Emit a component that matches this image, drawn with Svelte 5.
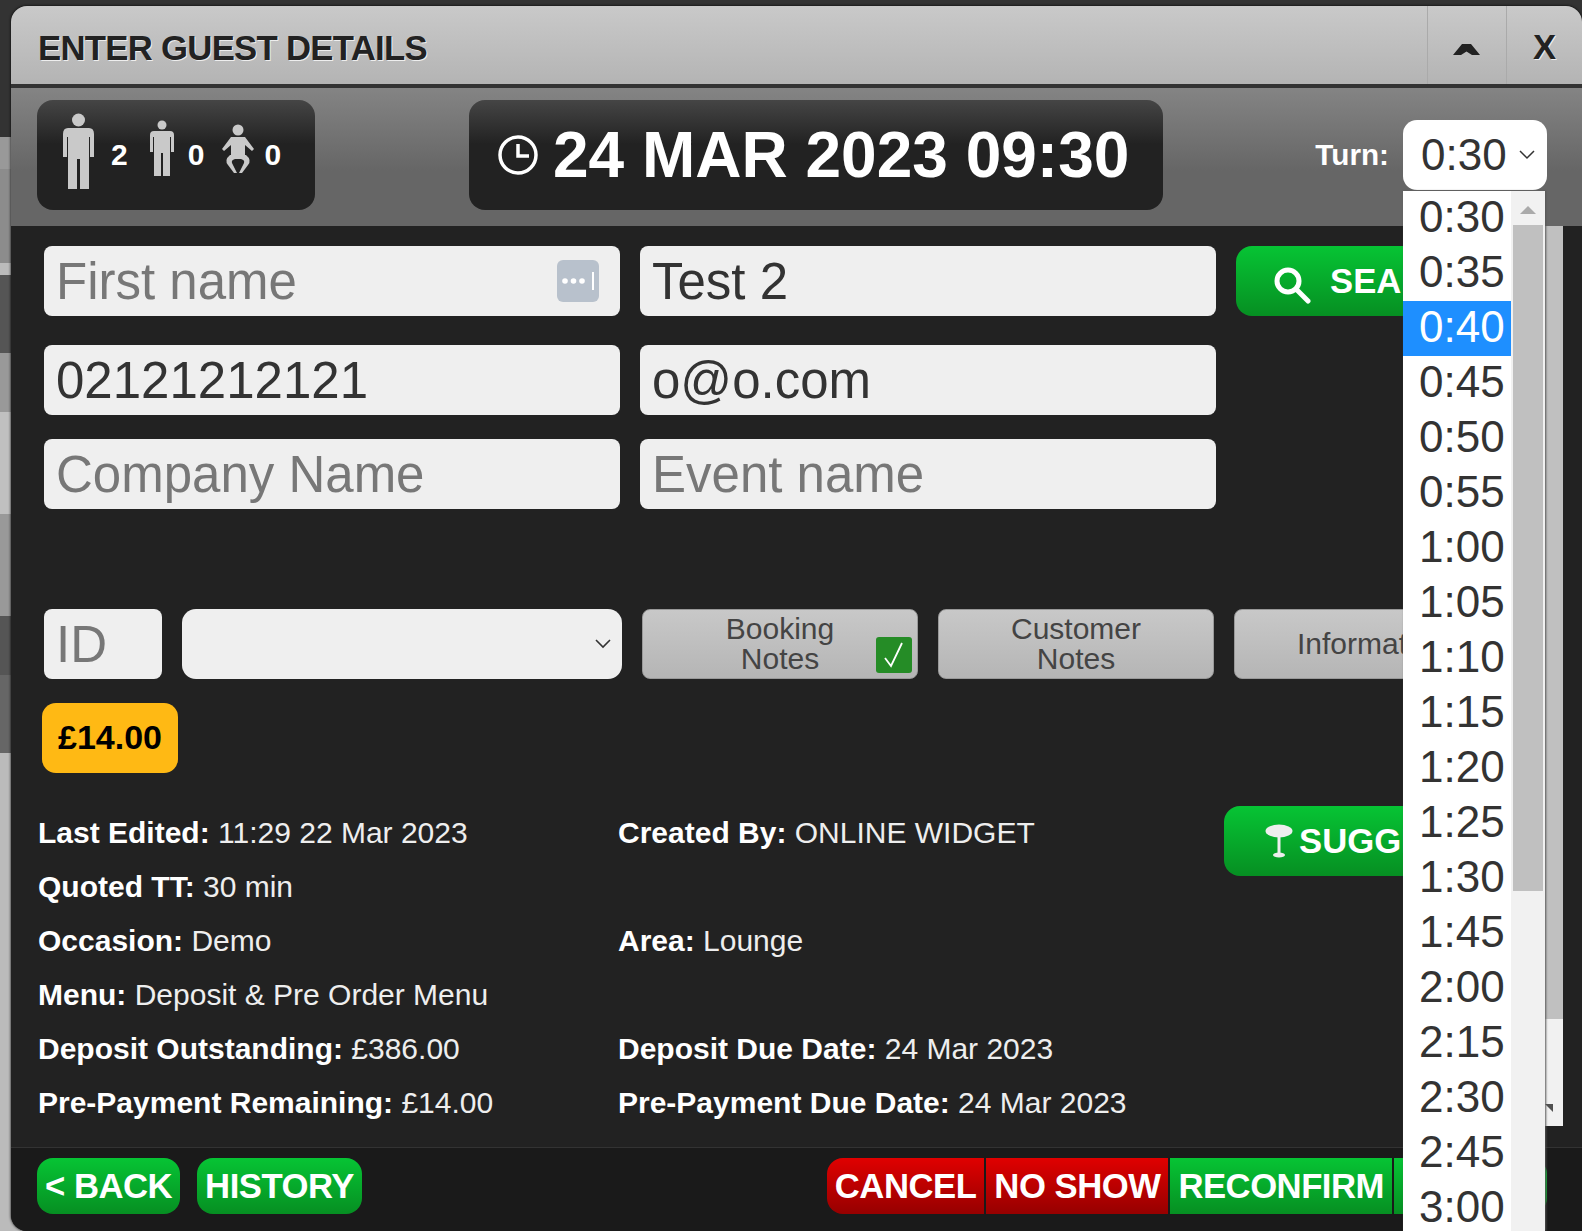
<script>
  const times = ["0:30","0:35","0:40","0:45","0:50","0:55","1:00","1:05","1:10","1:15","1:20","1:25","1:30","1:45","2:00","2:15","2:30","2:45","3:00"];
  const info = [
    [["Last Edited:", "11:29 22 Mar 2023"], ["Created By:", "ONLINE WIDGET"]],
    [["Quoted TT:", "30 min"], null],
    [["Occasion:", "Demo"], ["Area:", "Lounge"]],
    [["Menu:", "Deposit & Pre Order Menu"], null],
    [["Deposit Outstanding:", "£386.00"], ["Deposit Due Date:", "24 Mar 2023"]],
    [["Pre-Payment Remaining:", "£14.00"], ["Pre-Payment Due Date:", "24 Mar 2023"]]
  ];
</script>

<div class="page">
  <div class="modal">
    <header class="title">
      <h1>ENTER GUEST DETAILS</h1>
      <div class="title-btn collapse">
        <svg width="30" height="14" viewBox="0 0 30 14"><path d="M1 13 L10 2 H19 L28 13 H20 L14.500 9.500 L9 13 Z" fill="#222"/></svg>
      </div>
      <div class="title-btn close">X</div>
    </header>

    <div class="toolbar">
      <div class="pill covers">
        <svg class="man" width="33" height="77" viewBox="0 0 33 77" fill="#c9c9c9">
          <circle cx="16.500" cy="7" r="6.500"/>
          <path d="M6 15 H27 Q32 15 32 21 V44 H28 V24 H27 V76 H18 V46 H15 V76 H6 V24 H5 V44 H1 V21 Q1 15 6 15Z"/>
        </svg>
        <span class="count first">2</span>
        <svg class="child" width="24" height="56" viewBox="0 0 24 56" fill="#c9c9c9">
          <circle cx="12" cy="5" r="4.500"/>
          <path d="M4 11 H20 Q24 11 24 15 V32 H21 V17 H20 V56 H13 V33 H11 V56 H4 V17 H3 V32 H0 V15 Q0 11 4 11Z"/>
        </svg>
        <span class="count second">0</span>
        <svg class="baby" width="32" height="50" viewBox="0 0 32 50" fill="#c9c9c9">
          <circle cx="16" cy="6" r="5.500"/>
          <path d="M9 13 H23 L32 25 L30 27 L23 21 V31 H9 V21 L2 27 L0 25Z"/>
          <path d="M8 31 Q2 36 6 41 L12 49 H15 L10 39 Q9 36 13 35 H19 Q23 36 22 39 L17 49 H20 L26 41 Q30 36 24 31Z"/>
        </svg>
        <span class="count third">0</span>
      </div>

      <div class="pill when">
        <svg width="42" height="42" viewBox="0 0 42 42" fill="none" stroke="#fff" stroke-width="3.500">
          <circle cx="21" cy="21" r="18"/>
          <path d="M21 10 V22 H32"/>
        </svg>
        <span>24 MAR 2023 09:30</span>
      </div>

      <label class="turn-label">Turn:</label>
      <div class="turn">
        <span>0:30</span>
        <svg width="16" height="10" viewBox="0 0 16 10" fill="none" stroke="#333" stroke-width="1.500"><path d="M1 1 L8 8 L15 1"/></svg>
        <div class="dropdown">
          <ul>
            {#each times as t}
              <li class:on={t === "0:40"}>{t}</li>
            {/each}
          </ul>
          <div class="list-scroll">
            <div class="arrow-up"></div>
            <div class="list-thumb"></div>
          </div>
        </div>
      </div>
    </div>

    <div class="body">
      <div class="content">
        <div class="row first-row">
          <div class="field">
            <input placeholder="First name" />
            <div class="keyicon">
              <svg width="42" height="42" viewBox="0 0 42 42"><rect width="42" height="42" rx="6" fill="#b8c1cc"/><circle cx="8" cy="21" r="2.800" fill="#fff"/><circle cx="16.500" cy="21" r="2.800" fill="#fff"/><circle cx="25" cy="21" r="2.800" fill="#fff"/><rect x="35" y="12" width="2" height="18" fill="#fff"/></svg>
            </div>
          </div>
          <input value="Test 2" />
          <div class="green-btn search">
            <svg width="38" height="38" viewBox="0 0 38 38" fill="none" stroke="#fff" stroke-width="5"><circle cx="15" cy="15" r="11"/><path d="M23 23 L35 35" stroke-linecap="round"/></svg>
            <span>SEARCH</span>
          </div>
        </div>
        <div class="row second-row">
          <input value="02121212121" />
          <input value="o@o.com" />
        </div>
        <div class="row third-row">
          <input placeholder="Company Name" />
          <input placeholder="Event name" />
        </div>

        <div class="row notes-row">
          <input class="id" placeholder="ID" />
          <div class="tag-select">
            <svg width="16" height="10" viewBox="0 0 16 10" fill="none" stroke="#333" stroke-width="1.600"><path d="M1 1 L8 8 L15 1"/></svg>
          </div>
          <div class="note-btn">Booking<br />Notes
            <div class="tick">
              <svg width="24" height="28" viewBox="0 0 24 28" fill="none" stroke="#fff" stroke-width="1.800"><path d="M3 17 L9 25 L20 2"/></svg>
            </div>
          </div>
          <div class="note-btn">Customer<br />Notes</div>
          <div class="note-btn">Information</div>
        </div>

        <div class="price">£14.00</div>

        <div class="details">
          <div class="info">
            {#each info as row}
              {#each row as cell}
                <div class="cell">
                  {#if cell}<b>{cell[0]}</b> {cell[1]}{/if}
                </div>
              {/each}
            {/each}
          </div>
          <div class="green-btn suggest">
            <svg width="28" height="34" viewBox="0 0 28 34" fill="#eee"><ellipse cx="14" cy="7" rx="13.500" ry="6.500"/><rect x="12.500" y="12" width="3" height="18"/><ellipse cx="14" cy="31" rx="6" ry="2.500"/></svg>
            <span>SUGGEST</span>
          </div>
        </div>
      </div>

      <div class="page-scroll">
        <div class="page-thumb"></div>
        <div class="page-track">
          <div class="arrow-down"></div>
        </div>
      </div>
    </div>

    <footer class="bottom">
      <div class="foot-btn green round">&lt; BACK</div>
      <div class="foot-btn green round">HISTORY</div>
      <div class="actions">
        <div class="foot-btn red start">CANCEL</div>
        <div class="foot-btn red">NO SHOW</div>
        <div class="foot-btn green">RECONFIRM</div>
        <div class="foot-btn green end save">UPDATE</div>
      </div>
    </footer>
  </div>
</div>

<style>
  :global(body) {
    margin: 0;
    overflow: hidden;
    background: #222;
    font-family: "Liberation Sans", Arial, sans-serif;
  }
  .page {
    height: 100vh;
    box-sizing: border-box;
    padding: 6px 0 0 11px;
    /* bits of the page behind the modal */
    background: linear-gradient(
      #333 0 137px,
      #999 137px 169px,
      #8c8c8c 169px 263px,
      #bbb 263px 275px,
      #555 275px 353px,
      #999 353px 412px,
      #c0c0c0 412px 514px,
      #999 514px 616px,
      #555 616px 675px,
      #666 675px 753px,
      #bbb 753px
    );
    overflow: hidden;
  }
  .modal {
    height: 100%;
    display: flex;
    flex-direction: column;
    border-radius: 16px 16px 0 16px;
    overflow: hidden;
    background: #222;
    box-shadow: 0 0 3px #000;
  }

  /* title bar */
  .title {
    height: 78px;
    flex: none;
    display: flex;
    align-items: stretch;
    background: linear-gradient(#c9c9c9, #b4b4b4);
    border-bottom: 4px solid #333;
    color: #222;
  }
  .title h1 {
    flex: 1;
    margin: 0;
    padding: 3px 0 0 27px;
    font-size: 34.700px;
    letter-spacing: -0.700px;
    line-height: 78px;
    font-weight: bold;
    text-shadow: 1px 1px 0 #eee;
  }
  .title-btn {
    display: flex;
    align-items: center;
    justify-content: center;
    padding-top: 4px;
    border-left: 1px solid #aaa;
    font-size: 34.700px;
    font-weight: bold;
    text-shadow: 1px 1px 0 #eee;
  }
  .collapse { width: 78px; }
  .collapse svg { margin-top: 3px; }
  .close { width: 75px; }

  /* toolbar */
  .toolbar {
    height: 138px;
    flex: none;
    display: flex;
    align-items: flex-start;
    box-sizing: border-box;
    padding: 12px 35px 0 26px;
    background: linear-gradient(#848484, #666 60%);
    position: relative;
    z-index: 2;
  }
  .pill {
    height: 110px;
    border-radius: 16px;
    background: linear-gradient(#454545, #222 40%);
    color: #fff;
    display: flex;
    align-items: center;
    font-weight: bold;
    box-sizing: border-box;
  }
  .covers {
    width: 278px;
    padding-left: 25px;
  }
  .covers svg { filter: blur(0.5px); }
  .man { margin-top: -8px; }
  .child { margin-top: -14px; }
  .baby { margin-top: -12px; }
  .count { font-size: 30px; }
  .first { margin: 0 22px 0 16px; }
  .second { margin: 0 18px 0 14px; }
  .third { margin-left: 10px; }
  .when {
    width: 694px;
    margin-left: 154px;
    padding-left: 28px;
    font-size: 64px;
    gap: 14px;
  }
  .turn-label {
    margin: 35px 0 0 auto;
    padding-right: 14px;
    font-size: 29.700px;
    line-height: 40px;
    font-weight: bold;
    color: #fff;
  }
  .turn {
    width: 144px;
    height: 70px;
    margin-top: 20px;
    position: relative;
    background: #fff;
    border-radius: 14px;
    display: flex;
    align-items: center;
    font-size: 44px;
    color: #333;
  }
  .turn span { padding-left: 18px; }
  .turn > svg { margin-left: 12px; }
  .dropdown {
    position: absolute;
    top: 71px;
    left: 0;
    width: 142px;
    height: 1040px;
    display: flex;
    overflow: hidden;
    background: #fff;
    box-shadow: 1px 0 2px #555;
  }
  .dropdown ul {
    list-style: none;
    margin: 0;
    padding: 0;
    width: 108px;
    flex: none;
  }
  .dropdown li {
    height: 55px;
    line-height: 51px;
    padding-left: 16px;
    color: #333;
  }
  .dropdown li.on {
    background: #1e8fff;
    color: #fff;
  }
  .list-scroll {
    flex: 1;
    background: #f1f1f1;
    position: relative;
  }
  .arrow-up {
    width: 0;
    height: 0;
    margin: 15px auto 0;
    border: 8px solid transparent;
    border-top: 0;
    border-bottom: 8px solid #aaa;
  }
  .list-thumb {
    position: absolute;
    top: 34px;
    left: 2px;
    right: 2px;
    height: 666px;
    background: #c0c0c0;
  }

  /* body */
  .body {
    flex: 1;
    display: flex;
    align-items: flex-start;
    min-height: 0;
  }
  .content {
    flex: 1;
    min-width: 0;
    overflow: hidden;
    height: 100%;
    box-sizing: border-box;
    padding-top: 20px;
  }
  .row {
    display: flex;
    gap: 20px;
    padding-left: 33px;
  }
  input {
    width: 576px;
    height: 70px;
    flex: none;
    box-sizing: border-box;
    border: 0;
    outline: 0;
    padding: 0 12px;
    border-radius: 8px;
    background: #efefef;
    font-family: inherit;
    font-size: 51px;
    color: #333;
  }
  input::placeholder { color: #777; opacity: 1; }
  .field { position: relative; flex: none; display: flex; }
  .keyicon {
    position: absolute;
    top: 14px;
    right: 21px;
    height: 42px;
  }
  .second-row { margin-top: 29px; }
  .third-row { margin-top: 24px; }
  .notes-row { margin-top: 100px; }
  input.id { width: 118px; }
  .tag-select {
    width: 440px;
    height: 70px;
    flex: none;
    border-radius: 14px;
    background: #efefef;
    display: flex;
    align-items: center;
    justify-content: flex-end;
    padding-right: 11px;
    box-sizing: border-box;
  }
  .note-btn {
    width: 276px;
    height: 70px;
    flex: none;
    position: relative;
    box-sizing: border-box;
    border: 1px solid #999;
    border-radius: 8px;
    background: linear-gradient(#c8c8c8, #b5b5b5);
    color: #444;
    font-size: 30px;
    line-height: 30px;
    display: flex;
    align-items: center;
    justify-content: center;
    text-align: center;
    flex-direction: column;
  }
  .tick {
    position: absolute;
    right: 5px;
    bottom: 5px;
    width: 36px;
    height: 36px;
    border-radius: 3px;
    background: #258c26;
    display: flex;
    align-items: center;
    justify-content: center;
  }
  .green-btn {
    height: 70px;
    width: 300px;
    flex: none;
    border-radius: 16px;
    background: linear-gradient(#06c434, #068f22);
    color: #fff;
    display: flex;
    align-items: center;
    font-size: 34.700px;
    font-weight: bold;
    box-sizing: border-box;
  }
  .search { padding-left: 37px; gap: 19px; }
  .search svg { margin-top: 8px; }
  .suggest { padding-left: 41px; gap: 6px; margin-top: 1px; }
  .price {
    margin: 24px 0 0 31px;
    width: 136px;
    height: 70px;
    border-radius: 14px;
    background: #ffb914;
    color: #000;
    font-size: 34px;
    font-weight: bold;
    line-height: 68px;
    text-align: center;
  }
  .details {
    display: flex;
    padding-left: 27px;
    margin-top: 32px;
  }
  .info {
    width: 1186px;
    flex: none;
    display: grid;
    grid-template-columns: 580px 606px;
    grid-auto-rows: 54px;
    font-size: 30px;
    line-height: 56px;
    color: #eee;
  }
  .info b { color: #fff; }

  /* scrollbar behind the open list */
  .page-scroll {
    width: 18px;
    height: 900px;
    flex: none;
    margin-right: 19px;
    display: flex;
    flex-direction: column;
  }
  .page-thumb {
    height: 793px;
    background: #c0c0c0;
  }
  .page-track {
    flex: 1;
    background: #f1f1f1;
    position: relative;
  }
  .arrow-down {
    position: absolute;
    left: 0;
    bottom: 14px;
    width: 0;
    height: 0;
    border-top: 8px solid #505050;
    border-left: 8px solid transparent;
  }

  /* footer */
  .bottom {
    height: 84px;
    flex: none;
    box-sizing: border-box;
    border-top: 1px solid #333;
    background: #1a1a1a;
    padding: 10px 35px 0 26px;
    display: flex;
    align-items: flex-start;
    gap: 17px;
  }
  .actions {
    margin-left: auto;
    display: flex;
    gap: 2px;
  }
  .foot-btn {
    height: 56px;
    line-height: 56px;
    padding: 0 8px;
    color: #fff;
    font-size: 34.700px;
    letter-spacing: -0.500px;
    font-weight: bold;
  }
  .green { background: linear-gradient(#06c434, #068f22); }
  .red { background: linear-gradient(#e00000, #960000); }
  .round { border-radius: 16px; }
  .start { border-radius: 16px 0 0 16px; }
  .end { border-radius: 0 16px 16px 0; }
  .save { padding: 0 8px; }
</style>
